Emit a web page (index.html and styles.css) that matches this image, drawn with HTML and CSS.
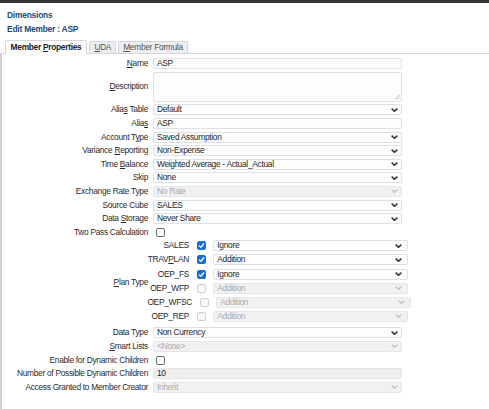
FILE: index.html
```html
<!DOCTYPE html>
<html>
<head>
<meta charset="utf-8">
<link rel="stylesheet" href="styles.css">
</head>
<body>
<div class="topbar"></div>
<div class="head">
  <div class="title">Dimensions</div>
  <div class="title">Edit Member : ASP</div>
</div>
<div class="tabs">
  <div class="tab active">Member <u>P</u>roperties</div>
  <div class="tab"><u>U</u>DA</div>
  <div class="tab"><u>M</u>ember Formula</div>
</div>
<div class="panel">
  <div class="form">
    <div class="lbl"><u>N</u>ame</div>
    <div class="ctl">ASP</div>

    <div class="lbl"><u>D</u>escription</div>
    <div class="ctl textarea"><svg class="grip" viewBox="0 0 6 6"><path d="M5.5 1 L1 5.5 M5.5 3.5 L3.5 5.5" stroke="#999" stroke-width="0.7" fill="none"/></svg></div>

    <div class="lbl">Alia<u>s</u> Table</div>
    <div class="ctl sel">Default<svg class="chev" viewBox="0 0 7 4"><path d="M0.6 0.6 L3.5 3.3 L6.4 0.6" stroke="#333" stroke-width="1.5" fill="none"/></svg></div>

    <div class="lbl">Alia<u>s</u></div>
    <div class="ctl">ASP</div>

    <div class="lbl">Account T<u>y</u>pe</div>
    <div class="ctl sel">Saved Assumption<svg class="chev" viewBox="0 0 7 4"><path d="M0.6 0.6 L3.5 3.3 L6.4 0.6" stroke="#333" stroke-width="1.5" fill="none"/></svg></div>

    <div class="lbl">Variance <u>R</u>eporting</div>
    <div class="ctl sel">Non-Expense<svg class="chev" viewBox="0 0 7 4"><path d="M0.6 0.6 L3.5 3.3 L6.4 0.6" stroke="#333" stroke-width="1.5" fill="none"/></svg></div>

    <div class="lbl">Time <u>B</u>alance</div>
    <div class="ctl sel">Weighted Average - Actual_Actual<svg class="chev" viewBox="0 0 7 4"><path d="M0.6 0.6 L3.5 3.3 L6.4 0.6" stroke="#333" stroke-width="1.5" fill="none"/></svg></div>

    <div class="lbl">Skip</div>
    <div class="ctl sel">None<svg class="chev" viewBox="0 0 7 4"><path d="M0.6 0.6 L3.5 3.3 L6.4 0.6" stroke="#333" stroke-width="1.5" fill="none"/></svg></div>

    <div class="lbl">Exchange Rate Type</div>
    <div class="ctl sel dis">No Rate<svg class="chev" viewBox="0 0 7 4"><path d="M0.6 0.6 L3.5 3.3 L6.4 0.6" stroke="#bbb" stroke-width="1.2" fill="none"/></svg></div>

    <div class="lbl">Source Cube</div>
    <div class="ctl sel">SALES<svg class="chev" viewBox="0 0 7 4"><path d="M0.6 0.6 L3.5 3.3 L6.4 0.6" stroke="#333" stroke-width="1.5" fill="none"/></svg></div>

    <div class="lbl">Data <u>S</u>torage</div>
    <div class="ctl sel">Never Share<svg class="chev" viewBox="0 0 7 4"><path d="M0.6 0.6 L3.5 3.3 L6.4 0.6" stroke="#333" stroke-width="1.5" fill="none"/></svg></div>

    <div class="lbl">Two Pass Calculation</div>
    <div class="cbcell"><div class="cb"></div></div>

    <div class="lbl"><u>P</u>lan Type</div>
    <div class="plan">
      <div class="prow">
        <div class="pname">SALES</div>
        <div class="cb on"><svg viewBox="0 0 7 7"><path d="M1 3.6 L2.8 5.3 L6 1.5" stroke="#fff" stroke-width="1.3" fill="none"/></svg></div>
        <div class="ctl sel">Ignore<svg class="chev" viewBox="0 0 7 4"><path d="M0.6 0.6 L3.5 3.3 L6.4 0.6" stroke="#333" stroke-width="1.5" fill="none"/></svg></div>
      </div>
      <div class="prow">
        <div class="pname">TRAV<u>P</u>LAN</div>
        <div class="cb on"><svg viewBox="0 0 7 7"><path d="M1 3.6 L2.8 5.3 L6 1.5" stroke="#fff" stroke-width="1.3" fill="none"/></svg></div>
        <div class="ctl sel">Addition<svg class="chev" viewBox="0 0 7 4"><path d="M0.6 0.6 L3.5 3.3 L6.4 0.6" stroke="#333" stroke-width="1.5" fill="none"/></svg></div>
      </div>
      <div class="prow">
        <div class="pname">OEP_FS</div>
        <div class="cb on"><svg viewBox="0 0 7 7"><path d="M1 3.6 L2.8 5.3 L6 1.5" stroke="#fff" stroke-width="1.3" fill="none"/></svg></div>
        <div class="ctl sel">Ignore<svg class="chev" viewBox="0 0 7 4"><path d="M0.6 0.6 L3.5 3.3 L6.4 0.6" stroke="#333" stroke-width="1.5" fill="none"/></svg></div>
      </div>
      <div class="prow">
        <div class="pname">OEP_WFP</div>
        <div class="cb dcb"></div>
        <div class="ctl sel dis">Addition<svg class="chev" viewBox="0 0 7 4"><path d="M0.6 0.6 L3.5 3.3 L6.4 0.6" stroke="#bbb" stroke-width="1.2" fill="none"/></svg></div>
      </div>
      <div class="prow shift">
        <div class="pname">OEP_WFSC</div>
        <div class="cb dcb"></div>
        <div class="ctl sel dis">Addition<svg class="chev" viewBox="0 0 7 4"><path d="M0.6 0.6 L3.5 3.3 L6.4 0.6" stroke="#bbb" stroke-width="1.2" fill="none"/></svg></div>
      </div>
      <div class="prow">
        <div class="pname">OEP_REP</div>
        <div class="cb dcb"></div>
        <div class="ctl sel dis">Addition<svg class="chev" viewBox="0 0 7 4"><path d="M0.6 0.6 L3.5 3.3 L6.4 0.6" stroke="#bbb" stroke-width="1.2" fill="none"/></svg></div>
      </div>
    </div>

    <div class="lbl">Data Type</div>
    <div class="ctl sel">Non Currency<svg class="chev" viewBox="0 0 7 4"><path d="M0.6 0.6 L3.5 3.3 L6.4 0.6" stroke="#333" stroke-width="1.5" fill="none"/></svg></div>

    <div class="lbl"><u>S</u>mart Lists</div>
    <div class="ctl sel dis">&lt;None&gt;<svg class="chev" viewBox="0 0 7 4"><path d="M0.6 0.6 L3.5 3.3 L6.4 0.6" stroke="#bbb" stroke-width="1.2" fill="none"/></svg></div>

    <div class="lbl">Enable for Dynamic Children</div>
    <div class="cbcell"><div class="cb"></div></div>

    <div class="lbl">Number of Possible Dynamic Children</div>
    <div class="ctl ro">10</div>

    <div class="lbl">Access Granted to Member Creator</div>
    <div class="ctl sel dis">Inherit<svg class="chev" viewBox="0 0 7 4"><path d="M0.6 0.6 L3.5 3.3 L6.4 0.6" stroke="#bbb" stroke-width="1.2" fill="none"/></svg></div>
  </div>
</div>
</body>
</html>
```

FILE: styles.css
```css
* { box-sizing: border-box; }
body {
  margin: 0;
  background: #fff;
  font-family: "Liberation Sans", Arial, sans-serif;
  font-size: 8.4px;
  letter-spacing: -0.3px;
  color: #2a2a2a;
}
u { text-decoration-thickness: 0.6px; text-underline-offset: 1px; }
.topbar { height: 3px; background: #353535; }
.head { padding: 4.7px 0 0 7px; }
.title {
  font-weight: bold;
  color: #1c4a78;
  line-height: 14px;
  letter-spacing: -0.2px;
}
.tabs {
  display: flex;
  gap: 2px;
  margin-top: 4px;
  padding-left: 4.6px;
  align-items: flex-end;
}
.tab {
  height: 12px;
  line-height: 11px;
  padding: 0 4px;
  border: 1px solid #d3d6da;
  border-bottom: none;
  background: #eceef0;
  color: #555;
  border-radius: 2px 2px 0 0;
}
.tab.active {
  height: 14px;
  line-height: 13px;
  background: #fff;
  color: #222;
  font-weight: bold;
  margin-bottom: -1px;
  position: relative;
  z-index: 1;
  padding: 0 5px;
}
.panel {
  border-top: 1px solid #d3d6da;
  border-left: 2px solid #cfd2d6;
  height: 360px;
  padding-top: 4.5px;
}
.form {
  display: grid;
  grid-template-columns: 146px 249px;
  column-gap: 5px;
  row-gap: 2.6px;
  align-items: center;
}
.lbl {
  text-align: right;
  line-height: 11px;
  white-space: nowrap;
}
.ctl {
  height: 11px;
  border: 1px solid #dde0e4;
  border-radius: 2px;
  background: #fcfdfe;
  color: #1e1e1e;
  line-height: 9px;
  padding: 0 3px;
  position: relative;
  white-space: nowrap;
}
.sel { padding-right: 12px; }
.chev {
  position: absolute;
  right: 3px;
  top: 2.5px;
  width: 7px;
  height: 4px;
}
.dis { background: #f1f1f2; color: #aaa; border-color: #e5e6e8; }
.ro { background: #efefef; border-color: #e6e6e6; }
.textarea { height: 30px; }
.grip {
  position: absolute;
  right: 1px;
  bottom: 1px;
  width: 6px;
  height: 6px;
}
.cbcell { display: flex; align-items: center; height: 11px; padding-left: 3px; }
.cb {
  width: 9px;
  height: 9px;
  border: 1px solid #6a6a6a;
  border-radius: 2px;
  background: #fff;
  flex: none;
}
.cb svg { display: block; width: 7px; height: 7px; }
.cb.on { background: #1a6fd1; border-color: #1a6fd1; }
.cb.dcb { border-color: #d0d0d0; background: #f8f8f8; }
.plan {
  display: flex;
  flex-direction: column;
  gap: 3.1px;
  margin-bottom: 3px;
}
.prow { display: flex; align-items: center; height: 11px; }
.pname {
  width: 36px;
  display: flex;
  justify-content: flex-end;
  white-space: nowrap;
  margin-right: 8px;
  flex: none;
  line-height: 11px;
}
.prow .cb { margin-right: 7.3px; }
.prow .ctl { width: 195px; flex: none; }
.prow .chev { right: 5px; }
.prow.shift { margin-left: 3px; }
```
